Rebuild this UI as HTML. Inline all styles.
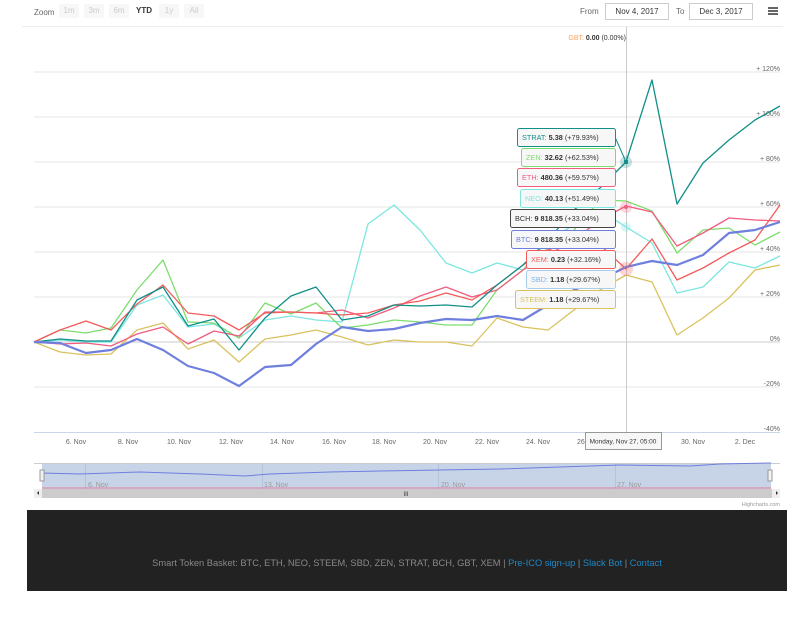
<!DOCTYPE html>
<html><head><meta charset="utf-8"><style>
body{margin:0;width:803px;height:591px;background:#fff;overflow:hidden;font-family:"Liberation Sans",sans-serif;position:relative}
.t{position:absolute;font-size:8px;color:#333}
.btn{position:absolute;top:4px;height:14px;background:#f7f7f7;color:#ccc;font-size:8px;line-height:14px;text-align:center;width:20px}
.inp{position:absolute;top:3px;height:15px;border:1px solid #ccc;font-size:8px;line-height:15px;text-align:center;color:#333;background:#fff}
.foot{position:absolute;left:27px;top:510px;width:760px;height:81px;background:#222;color:#888;font-size:9.3px;text-align:center;line-height:107px}
.foot a{color:#1e88c7;text-decoration:none}
</style></head><body>
<div class="t" style="left:34px;top:8px;color:#666">Zoom</div>
<div class="btn" style="left:59px">1m</div>
<div class="btn" style="left:84px">3m</div>
<div class="btn" style="left:109px">6m</div>
<div class="btn" style="left:134px;color:#333;font-weight:bold;background:#fff">YTD</div>
<div class="btn" style="left:159px">1y</div>
<div class="btn" style="left:184px">All</div>
<div class="t" style="left:580px;top:7px;color:#666">From</div>
<div class="inp" style="left:605px;width:62px">Nov 4, 2017</div>
<div class="t" style="left:676px;top:7px;color:#666">To</div>
<div class="inp" style="left:689px;width:62px">Dec 3, 2017</div>
<div style="position:absolute;left:768px;top:7px;width:10px;height:2px;background:#666;box-shadow:0 3px #666,0 6px #666"></div>
<svg width="803" height="510" style="position:absolute;left:0;top:0" font-family="Liberation Sans" font-size="7">
<line x1="22" y1="26.5" x2="783" y2="26.5" stroke="#eee"/>
<g stroke="#e6e6e6">
<line x1="34" y1="72" x2="780" y2="72"/><line x1="34" y1="117" x2="780" y2="117"/><line x1="34" y1="162" x2="780" y2="162"/><line x1="34" y1="207" x2="780" y2="207"/><line x1="34" y1="252" x2="780" y2="252"/><line x1="34" y1="297" x2="780" y2="297"/><line x1="34" y1="387" x2="780" y2="387"/>
</g>
<line x1="34" y1="342" x2="780" y2="342" stroke="#ccc"/>
<line x1="34" y1="432.5" x2="780" y2="432.5" stroke="#ccd6eb"/>
<g fill="#666" text-anchor="end">
<text x="780" y="71">+ 120%</text><text x="780" y="116">+ 100%</text><text x="780" y="161">+ 80%</text><text x="780" y="206">+ 60%</text><text x="780" y="251">+ 40%</text><text x="780" y="296">+ 20%</text><text x="780" y="341">0%</text><text x="780" y="386">-20%</text><text x="780" y="431">-40%</text>
</g>
<g fill="#666" text-anchor="middle">
<text x="76" y="444">6. Nov</text><text x="128" y="444">8. Nov</text><text x="179" y="444">10. Nov</text><text x="231" y="444">12. Nov</text><text x="282" y="444">14. Nov</text><text x="334" y="444">16. Nov</text><text x="384" y="444">18. Nov</text><text x="435" y="444">20. Nov</text><text x="487" y="444">22. Nov</text><text x="538" y="444">24. Nov</text><text x="589" y="444">26. Nov</text><text x="693" y="444">30. Nov</text><text x="745" y="444">2. Dec</text>
</g>
<line x1="626.5" y1="27" x2="626.5" y2="432" stroke="#ccc"/>
<g fill="none" stroke-width="1.3" stroke-linejoin="round">
<polyline stroke="#d9c25e" points="34,342 60,352 86,355 111,354 137,330 163,323 188,349 214,340 239,362 265,339 291,335 316,330 342,337 368,345 394,340 420,342 446,342 472,346 497,318 523,327 548,330 574,310 600,290 626,275 652,282 677,335 703,318 729,298 755,270 780,265"/>
<polyline stroke="#7ce6e0" points="34,342 60,340 86,342 111,342 137,305 163,295 188,327 214,324 239,338 265,320 291,316 316,320 342,322 368,224 394,205 420,230 446,263 472,273 497,263 523,270 548,240 574,225 600,210 626,227 652,243 677,293 703,287 729,262 755,268 780,256"/>
<polyline stroke="#7cdd6c" points="34,342 60,330 86,333 111,328 137,290 163,260 188,322 214,323 239,338 265,303 291,314 316,303 342,328 368,325 394,320 420,322 446,325 472,325 497,290 523,270 548,248 574,230 600,200 626,201 652,211 677,253 703,230 729,228 755,245 780,232"/>
<polyline stroke="#f15c80" points="34,342 60,344 86,343 111,346 137,334 163,327 188,344 214,331 239,336 265,312 291,312 316,313 342,310 368,318 394,308 420,296 446,287 472,297 497,290 523,270 548,255 574,240 600,220 626,206 652,212 677,246 703,233 729,218 755,220 780,221"/>
<polyline stroke="#f45b5b" points="34,342 60,330 86,321 111,330 137,304 163,285 188,313 214,316 239,330 265,313 291,312 316,313 342,315 368,313 394,305 420,301 446,293 472,300 497,285 523,265 548,250 574,240 600,245 626,269 652,239 677,280 703,268 729,253 755,240 780,205"/>
<polyline stroke="#118f88" points="34,342 60,339 86,341 111,341 137,300 163,287 188,326 214,319 239,350 265,318 291,296 316,287 342,320 368,316 394,305 420,306 446,305 472,307 497,285 523,265 548,240 574,210 600,188 626,162 652,80 677,204 703,163 729,140 755,120 780,106"/>
<polyline stroke="#6f7fdd" stroke-width="2.2" points="34,342 60,343 86,353 111,350 137,339 163,350 188,366 214,373 239,386 265,367 291,365 316,344 342,327 368,331 394,329 420,323 446,319 472,320 497,316 523,320 548,305 574,290 600,280 626,267 652,261 677,265 703,255 729,233 755,230 780,222"/>
</g>
<circle cx="626" cy="162" r="6" fill="#118f88" opacity=".25"/><rect x="624" y="160" width="4" height="4" fill="#118f88"/>
<circle cx="626" cy="207" r="6" fill="#f15c80" opacity=".25"/><circle cx="626" cy="207" r="2" fill="#f15c80"/>
<circle cx="626" cy="269" r="7" fill="#f45b5b" opacity=".25"/>
<circle cx="626" cy="227" r="5" fill="#7ce6e0" opacity=".3"/>
<text x="626" y="40" text-anchor="end" fill="#f7a35c">GBT: <tspan fill="#333" font-weight="bold">0.00</tspan><tspan fill="#333"> (0.00%)</tspan></text>
<g font-size="7.3">
<polyline fill="none" stroke="#118f88" points="615,137 626,162"/>
<rect x="517.5" y="128.5" width="98" height="18" rx="2" fill="#f7f7f7" stroke="#118f88"/><text x="522" y="140" fill="#118f88">STRAT: <tspan fill="#333" font-weight="bold">5.38</tspan><tspan fill="#333"> (+79.93%)</tspan></text>
<rect x="521.5" y="148.5" width="94" height="18" rx="2" fill="#f7f7f7" stroke="#7cdd6c"/><text x="526" y="160" fill="#7cdd6c">ZEN: <tspan fill="#333" font-weight="bold">32.62</tspan><tspan fill="#333"> (+62.53%)</tspan></text>
<rect x="517.5" y="168.5" width="98" height="18" rx="2" fill="#f7f7f7" stroke="#f15c80"/><text x="522" y="180" fill="#f15c80">ETH: <tspan fill="#333" font-weight="bold">480.36</tspan><tspan fill="#333"> (+59.57%)</tspan></text>
<rect x="520.5" y="189.5" width="95" height="18" rx="2" fill="#f7f7f7" stroke="#7ce6e0"/><text x="525" y="201" fill="#7ce6e0">NEO: <tspan fill="#333" font-weight="bold">40.13</tspan><tspan fill="#333"> (+51.49%)</tspan></text>
<rect x="510.5" y="209.5" width="105" height="18" rx="2" fill="#f7f7f7" stroke="#444"/><text x="515" y="221" fill="#333">BCH: <tspan font-weight="bold">9 818.35</tspan> (+33.04%)</text>
<rect x="511.5" y="230.5" width="104" height="18" rx="2" fill="#f7f7f7" stroke="#6f7fdd"/><text x="516" y="242" fill="#6f7fdd">BTC: <tspan fill="#333" font-weight="bold">9 818.35</tspan><tspan fill="#333"> (+33.04%)</tspan></text>
<rect x="526.5" y="250.5" width="89" height="18" rx="2" fill="#f7f7f7" stroke="#f45b5b"/><text x="531" y="262" fill="#f45b5b">XEM: <tspan fill="#333" font-weight="bold">0.23</tspan><tspan fill="#333"> (+32.16%)</tspan></text>
<rect x="526.5" y="270.5" width="89" height="18" rx="2" fill="#f7f7f7" stroke="#a8d0ee"/><text x="531" y="282" fill="#7cb5ec">SBD: <tspan fill="#333" font-weight="bold">1.18</tspan><tspan fill="#333"> (+29.67%)</tspan></text>
<rect x="515.5" y="290.5" width="100" height="18" rx="2" fill="#f7f7f7" stroke="#d9c25e"/><text x="520" y="302" fill="#d9c25e">STEEM: <tspan fill="#333" font-weight="bold">1.18</tspan><tspan fill="#333"> (+29.67%)</tspan></text>
</g>
<rect x="585.5" y="432.5" width="76" height="17" fill="#f7f7f7" stroke="#999"/>
<text x="623" y="443.5" text-anchor="middle" fill="#333" font-size="6.5">Monday, Nov 27, 05:00</text>
<!-- navigator -->
<line x1="34" y1="463.5" x2="780" y2="463.5" stroke="#ccc"/>
<rect x="42" y="464" width="729" height="25" fill="#c7d4e8"/>
<g stroke="#b4c2da"><line x1="85.5" y1="464" x2="85.5" y2="489"/><line x1="262.5" y1="464" x2="262.5" y2="489"/><line x1="438.5" y1="464" x2="438.5" y2="489"/><line x1="615.5" y1="464" x2="615.5" y2="489"/></g>
<polyline fill="none" stroke="#6f7fdd" points="42,473 80,474 140,472 200,474 245,476 270,474 330,472 380,471 440,470 500,469 560,467 620,465 690,466 720,464 771,463"/>
<line x1="42" y1="488" x2="771" y2="488" stroke="#f15c80" stroke-width=".7"/>
<rect x="40" y="470" width="4" height="11" fill="#f2f2f2" stroke="#999"/>
<rect x="768" y="470" width="4" height="11" fill="#f2f2f2" stroke="#999"/>
<g fill="#999" font-size="7"><text x="88" y="487">6. Nov</text><text x="264" y="487">13. Nov</text><text x="441" y="487">20. Nov</text><text x="617" y="487">27. Nov</text></g>
<rect x="34" y="489" width="746" height="9" fill="#ccc"/>
<rect x="34" y="489" width="8" height="9" fill="#eee"/><rect x="772" y="489" width="8" height="9" fill="#eee"/>
<path d="M39,491 l-2,2 2,2z M776,491 l2,2 -2,2z" fill="#333"/>
<text x="406" y="496" font-size="6" fill="#333" text-anchor="middle">III</text>
<text x="780" y="506" font-size="5.5" fill="#999" text-anchor="end">Highcharts.com</text>
</svg>
<div class="foot">Smart Token Basket: BTC, ETH, NEO, STEEM, SBD, ZEN, STRAT, BCH, GBT, XEM | <a>Pre-ICO sign-up</a> | <a>Slack Bot</a> | <a>Contact</a></div>
</body></html>
